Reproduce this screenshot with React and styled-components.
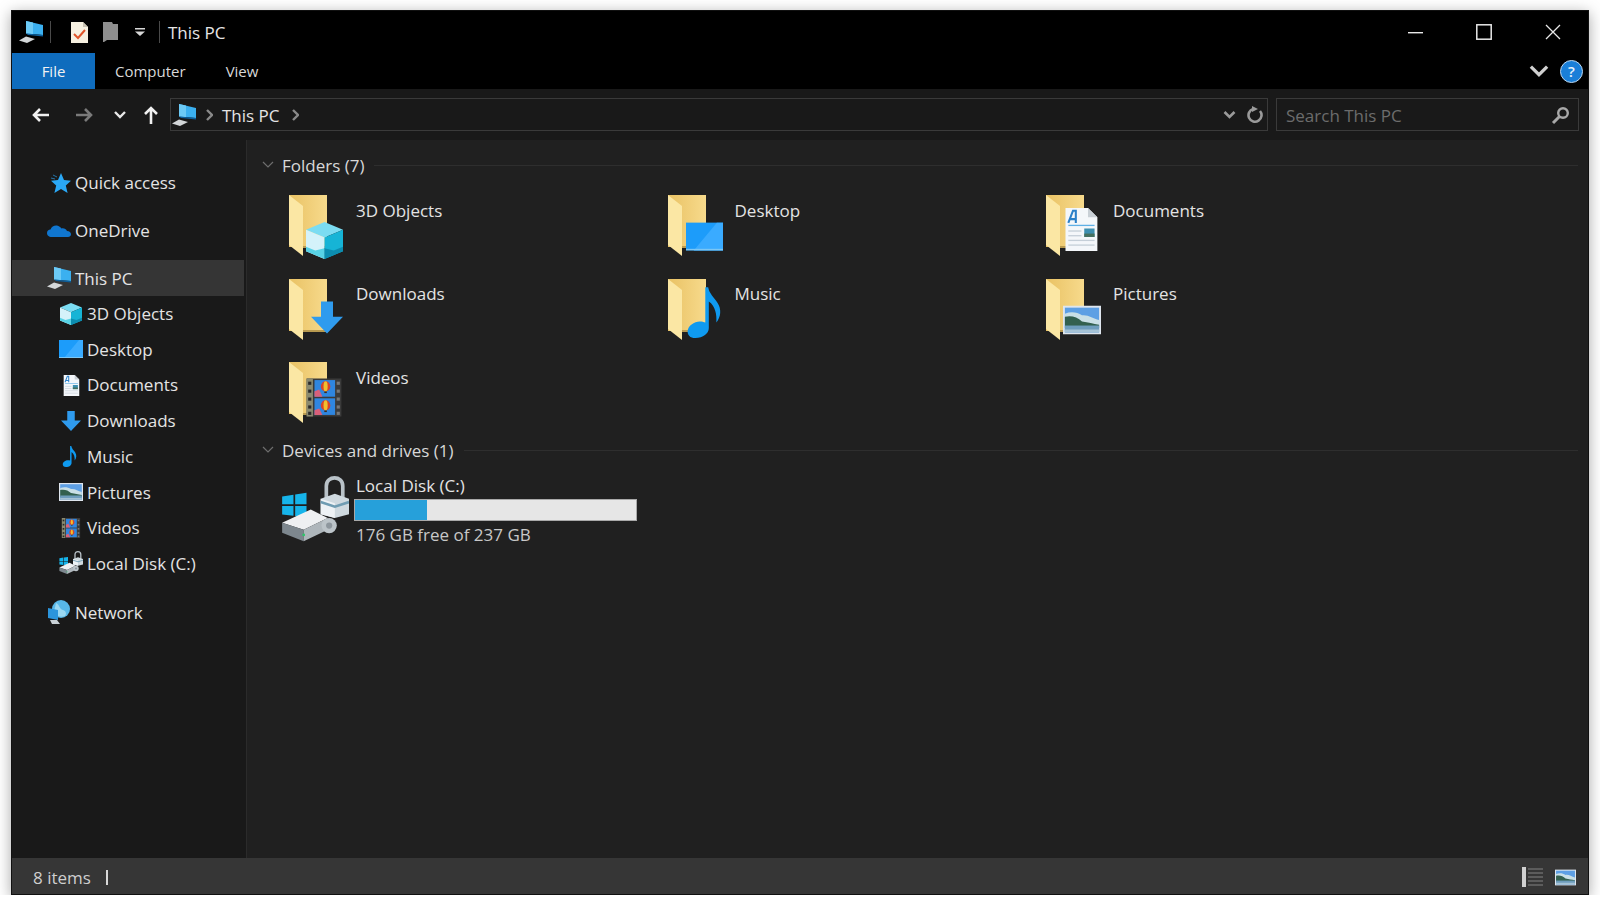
import styled, { createGlobalStyle } from "styled-components";

const GlobalStyle = createGlobalStyle`
  html, body {
    margin: 0;
    background: #fff;
  }
  body {
    font-family: "Open Sans", "Noto Sans", sans-serif;
    color: #e4e4e4;
  }
`;

// icons, all drawn in a 24x24 box so the folder can reuse them
const Cube = () => (
  <>
    <polygon points="12,0 24,5 12,10 0,5" fill="#7bdcf2" />
    <polygon points="0,5 12,10 12,24 0,19" fill="#d4f2fa" />
    <polygon points="12,10 24,5 24,19 12,24" fill="#16b4d6" />
    <polygon points="0,16 6,18.5 12,17 12,24 0,19" fill="#58d3e6" />
    <polygon points="12,17 18,18.5 24,16 24,19 12,24" fill="#0c8db0" />
  </>
);

const Screen = () => (
  <>
    <rect x="0" y="3" width="24" height="18" fill="#1c9cfa" />
    <polygon points="5,21 20,3 24,3 24,21" fill="#3aabff" />
    <rect x="0" y="20" width="24" height="1" fill="#7cc7f5" />
  </>
);

const Doc = () => (
  <>
    <polygon points="4,1 16,1 21,6 21,24 4,24" fill="#f4f7fa" />
    <polygon points="16,1 21,6 16,6" fill="#c9d0d6" />
    <path d="M5.5 9 L8 2.5 L9.5 2.5 L9.5 9 M6.5 7 H9.5" fill="none" stroke="#2b80c8" strokeWidth="1.1" />
    <rect x="5.5" y="10" width="14" height="0.7" fill="#5fb0e6" />
    <rect x="5.5" y="13" width="7" height="0.7" fill="#c5cfd8" />
    <rect x="5.5" y="15.5" width="7" height="0.7" fill="#c5cfd8" />
    <rect x="5.5" y="18" width="14" height="0.7" fill="#c5cfd8" />
    <rect x="5.5" y="20.5" width="14" height="0.7" fill="#c5cfd8" />
    <rect x="14" y="12" width="5.5" height="4.5" fill="#3d8fb0" />
    <rect x="14" y="14.7" width="5.5" height="1.8" fill="#46705e" />
  </>
);

const Arrow = () => (
  <polygon points="7.5,0 16.5,0 16.5,11.5 24,11.5 12,24 0,11.5 7.5,11.5" fill="#2f9bee" />
);

const Note = () => (
  <path
    d="M11 1 L12.3 1 C12.8 4 15 5.5 16.5 8 C18.5 11 18 14.5 16 17 C16.3 13.5 15.5 9.5 12.6 7.5 L12.6 19.5 C12.6 22 10 24 6.5 24 C4 24 3 22.5 3 21 C3 18.5 6 16.5 8.5 16.5 C9.5 16.5 10.3 16.7 11 17 Z"
    fill="#0f9af0"
  />
);

const Picture = () => (
  <>
    <rect x="0" y="3" width="24" height="18" fill="#dfe6ee" />
    <rect x="1.2" y="4.2" width="21.6" height="15.6" fill="#5d9fe4" />
    <path d="M1.2 8 C5 6.5 9 7 12 9 C16 8.5 19 11 22.8 12 V16 H1.2 Z" fill="#c9dfe6" />
    <path d="M1.2 10 C5 9 9 10 12 13 C16 13.5 19 14.5 22.8 15 V17 H1.2 Z" fill="#33604f" />
    <rect x="1.2" y="15.5" width="21.6" height="4.3" fill="#6e9dbd" />
    <rect x="1.2" y="18" width="21.6" height="1.8" fill="#a6c3d6" />
  </>
);

const Balloon = ({ y }) => (
  <>
    <ellipse cx="13" cy={y} rx="3" ry="3.2" fill="#d8442a" />
    <ellipse cx="13" cy={y} rx="1.3" ry="3.2" fill="#efc02e" />
    <rect x="12.2" y={y + 3.2} width="1.6" height="1" fill="#3a2a20" />
  </>
);

const Film = () => (
  <>
    <rect x="1" y="0" width="22" height="24" fill="#3a3a3a" />
    <rect x="1" y="0" width="4" height="24" fill="#8a8a70" />
    <rect x="6" y="1" width="13" height="10.5" fill="#2f86e0" />
    <rect x="6" y="12.5" width="13" height="10.5" fill="#2f86e0" />
    <polygon points="6,8 9,7 11,11.5 6,11.5" fill="#d8607a" />
    <polygon points="6,20 9,19 11,23 6,23" fill="#d8607a" />
    <Balloon y={5} />
    <Balloon y={17} />
    {[2, 7, 12, 17, 21].map((y) => (
      <g key={y}>
        <rect x="2" y={y} width="2" height="2" fill="#2a2a2a" />
        <rect x="20" y={y} width="2" height="2" fill="#777" />
      </g>
    ))}
  </>
);

const Drive = () => (
  <>
    <path d="M16 8 V3.5 C16 -0.3 21.8 -0.3 21.8 3.5 V8" fill="none" stroke="#b9c2c8" strokeWidth="1.3" />
    <polygon points="0.4,7.2 4.4,6.6 4.4,10 0.4,10" fill="#16b4ea" />
    <polygon points="5,6.5 9,5.9 9,10 5,10" fill="#16b4ea" />
    <polygon points="0.4,10.6 4.4,10.6 4.4,14 0.4,13.6" fill="#16b4ea" />
    <polygon points="5,10.6 9,10.6 9,14.6 5,14.1" fill="#16b4ea" />
    <polygon points="0.4,16.5 10.5,11.8 16.5,14.8 8,19" fill="#eef0f2" />
    <polygon points="0.4,16.5 8,19 8,23 0.4,20" fill="#7d878e" />
    <polygon points="8,19 16.5,14.8 16.5,19 8,23" fill="#aeb6bb" />
    <circle cx="8" cy="20.8" r="0.5" fill="#2ec46a" />
    <polygon points="14,8 19,6.3 24,8 24,13.5 19,14.8 14,13.5" fill="#cfd9df" />
    <polygon points="14,8 19,9.6 19,14.8 14,13.5" fill="#eef2f5" />
    <path d="M14 9.2 L19 10.8 L24 9.2" fill="none" stroke="#6f9cb2" strokeWidth="0.9" />
    <circle cx="17" cy="17.5" r="2.7" fill="#bcc4c9" />
    <circle cx="17" cy="17.5" r="1.1" fill="#8e979e" />
  </>
);

const Pc = () => (
  <>
    <polygon points="7,1 24,5 24,15 7,13.5" fill="#3bb0f0" />
    <polygon points="7,1 14,2.6 14,14 7,13.5" fill="#6ccaf6" />
    <polygon points="7,13.5 24,15 24,16.5 9,15" fill="#0b5e9c" />
    <polygon points="0,20.5 7,16.5 16,19 8,23" fill="#d3d6d8" />
  </>
);

const Star = () => (
  <>
    <polygon
      points="14,2 17,9 24,9.7 18.8,14.6 20.6,22 14,18 7.4,22 9.2,14.6 4,9.7 11,9"
      fill="#2aa8f6"
    />
    <path d="M6 4 L10 6 M4 7 L8 8" stroke="#2a8ccc" strokeWidth="0.8" />
  </>
);

const Cloud = () => (
  <path
    d="M5 18 C1.5 18 0 16 0 14 C0 12 1.5 10.5 3.5 10.5 C4.5 7.5 7.5 6 10 6.5 C12 7 13.5 8 14.5 9.5 C17 9 19 10 20 12 C22.5 12 24 13.5 24 15.3 C24 17 22.6 18 21 18 Z"
    fill="#1076cf"
  />
);

const Network = () => (
  <>
    <circle cx="14" cy="9" r="9" fill="#58b8e8" />
    <path d="M9 3 C13 5 12 9 16 10 C19 11 20 14 18 16 C14 18 9 16 7 12 Z" fill="#9ad8f2" />
    <polygon points="1,8 11,10 11,20 1,18" fill="#2b95dc" />
    <polygon points="3,20 10,20 13,24 5,24" fill="#c9d1d6" />
  </>
);

const GLYPHS = { Cube, Screen, Doc, Arrow, Note, Picture, Film, Drive, Pc, Star, Cloud, Network };

const Glyph = ({ name, size = 24 }) => {
  const Shape = GLYPHS[name];
  return (
    <svg width={size} height={size} viewBox="0 0 24 24">
      <Shape />
    </svg>
  );
};

const FOLDER_SPOT = {
  Cube: { x: 17, y: 27, w: 37, h: 37 },
  Screen: { x: 18, y: 23, w: 37, h: 37 },
  Doc: { x: 12, y: 11, w: 45, h: 45 },
  Arrow: { x: 22, y: 22, w: 32, h: 33 },
  Note: { x: 13, y: 6, w: 53, h: 53 },
  Picture: { x: 17, y: 22, w: 38, h: 38 },
  Film: { x: 16, y: 16, w: 38, h: 39 },
};

const FolderIcon = ({ name }) => {
  const spot = FOLDER_SPOT[name];
  const Shape = GLYPHS[name];
  return (
    <svg width="56" height="64" viewBox="0 0 56 64">
      <defs>
        <linearGradient id="folderBack" x1="0" y1="0" x2="1" y2="0">
          <stop offset="0" stopColor="#e9c264" />
          <stop offset="1" stopColor="#f7da8c" />
        </linearGradient>
      </defs>
      <rect x="0" y="0" width="38" height="52" fill="url(#folderBack)" />
      <rect x="13" y="51" width="25" height="2" fill="#b89a50" />
      <polygon points="0,0 14,11 14,61 0,50" fill="#fbe7a4" />
      <svg x={spot.x} y={spot.y} width={spot.w} height={spot.h} viewBox="0 0 24 24">
        <Shape />
      </svg>
    </svg>
  );
};

const Window = styled.div`
  margin: 10px 0 0 11px;
  width: 1578px;
  height: 885px;
  display: flex;
  flex-direction: column;
  background: #202020;
  border: 1px solid #111;
  box-sizing: border-box;
  box-shadow: 0 3px 14px rgba(0, 0, 0, 0.35);
`;

const TitleBar = styled.div`
  height: 42px;
  flex: none;
  background: #000;
  display: flex;
  align-items: center;
  padding-left: 7px;
`;

const QuickIcon = styled.div`
  display: flex;
  margin-right: ${(p) => p.$gap || 0}px;
`;

const TitleSep = styled.div`
  width: 1px;
  height: 22px;
  background: #4a4a4a;
  margin-right: ${(p) => p.$gap}px;
`;

const TitleText = styled.div`
  font-size: 17px;
  color: #e6e6e6;
`;

const WinControls = styled.div`
  margin-left: auto;
  display: flex;
  align-items: center;
  gap: 53px;
  padding-right: 27px;
`;

const Ribbon = styled.div`
  height: 36px;
  flex: none;
  background: #000;
  display: flex;
  align-items: stretch;
  font-size: 15px;
`;

const FileTab = styled.div`
  width: 83px;
  display: flex;
  align-items: center;
  justify-content: center;
  background: #0f6cbd;
  color: #f2f2f2;
`;

const RibbonTab = styled.div`
  display: flex;
  align-items: center;
  margin-left: ${(p) => p.$left}px;
  color: #d8d8d8;
`;

const RibbonRight = styled.div`
  margin-left: auto;
  display: flex;
  align-items: center;
  gap: 11px;
  padding-right: 5px;
`;

const HelpDot = styled.div`
  width: 23px;
  height: 23px;
  border-radius: 50%;
  background: #1a7fd8;
  border: 1px solid #bcd6ee;
  box-sizing: border-box;
  display: flex;
  align-items: center;
  justify-content: center;
  color: #e8f2fb;
  font-size: 15px;
  font-weight: 600;
`;

const AddressRow = styled.div`
  height: 51px;
  flex: none;
  background: #191919;
  display: flex;
  align-items: center;
  padding: 0 9px 0 20px;
`;

const NavButton = styled.div`
  display: flex;
  margin-right: ${(p) => p.$gap}px;
`;

const AddressBox = styled.div`
  width: 1098px;
  height: 33px;
  box-sizing: border-box;
  border: 1px solid #3a3a3a;
  display: flex;
  align-items: center;
  padding: 1px 3px 0 1px;
  font-size: 17px;
  color: #e4e4e4;
  white-space: nowrap;
`;

const Crumb = styled.span`
  display: flex;
  margin: 0 ${(p) => p.$right || 0}px 0 ${(p) => p.$left || 0}px;
`;

const AddressTools = styled.div`
  margin-left: auto;
  display: flex;
  align-items: center;
  gap: 11px;
`;

const SearchBox = styled.div`
  width: 303px;
  height: 33px;
  margin-left: 8px;
  box-sizing: border-box;
  border: 1px solid #3a3a3a;
  display: flex;
  align-items: center;
  justify-content: space-between;
  padding: 1px 8px 0 9px;
  font-size: 17px;
  color: #6c6c6c;
`;

const Main = styled.div`
  flex: 1;
  min-height: 0;
  display: flex;
`;

const Sidebar = styled.nav`
  width: 235px;
  flex: none;
  background: #191919;
  border-right: 1px solid #2b2b2b;
  box-sizing: border-box;
  padding-top: 25px;
`;

const NavRow = styled.div`
  height: ${(p) => (p.$active ? 35.4 : 35.7)}px;
  margin: ${(p) => p.$top || 0}px 2px 0 0;
  padding-left: ${(p) => (p.$sub ? 47 : 35)}px;
  display: flex;
  align-items: center;
  gap: 4px;
  font-size: 17px;
  color: #e4e4e4;
  background: ${(p) => (p.$active ? "#353535" : "transparent")};
`;

const NavIcon = styled.span`
  width: 24px;
  height: 24px;
  display: flex;
  align-items: center;
  justify-content: center;
`;

const Content = styled.main`
  flex: 1;
  min-width: 0;
  padding: 14px 10px 0 15px;
`;

const SectionHeader = styled.div`
  height: 22px;
  margin-top: ${(p) => p.$top || 0}px;
  display: flex;
  align-items: center;
  font-size: 17px;
  color: #d8d8d8;
`;

const HeaderLine = styled.div`
  flex: 1;
  height: 1px;
  margin-left: 10px;
  background: #2e2e2e;
`;

const FolderGrid = styled.div`
  display: grid;
  grid-template-columns: repeat(3, 378.5px);
  grid-auto-rows: 62px;
  row-gap: 21.5px;
  padding: 19px 0 0 27px;
`;

const Tile = styled.div`
  display: flex;
  gap: 11px;
  font-size: 17px;
  line-height: 24px;
  color: #e4e4e4;
`;

const TileName = styled.div`
  padding-top: 3.5px;
`;

const DriveTile = styled.div`
  display: flex;
  padding: 13px 0 0 19px;
  font-size: 17px;
  line-height: 24px;
`;

const DriveIcon = styled.div`
  width: 68px;
  height: 68px;
  margin-right: 5px;
  padding-top: 2px;
`;

const DriveInfo = styled.div`
  display: flex;
  flex-direction: column;
  width: 283px;
`;

const DriveName = styled.div`
  padding-left: 2px;
  height: 25px;
`;

const DriveFree = styled.div`
  padding-left: 2px;
  margin-top: 2px;
  color: #c8c8c8;
`;

const Meter = styled.div`
  height: 22px;
  box-sizing: border-box;
  border: 1px solid #a9a9a9;
  background: #e6e6e6;
`;

const MeterFill = styled.div`
  height: 100%;
  background: #26a0da;
`;

const StatusBar = styled.div`
  height: 36px;
  flex: none;
  background: #363636;
  display: flex;
  align-items: center;
  box-sizing: border-box;
  padding: 2px 12px 0 21px;
  font-size: 17px;
  color: #cfcfcf;
`;

const StatusSep = styled.div`
  width: 2px;
  height: 15px;
  margin-left: 15px;
  background: #d8d8d8;
`;

const ViewButtons = styled.div`
  margin-left: auto;
  display: flex;
  align-items: center;
  gap: 12px;
`;

const Chevron = ({ color = "#8a8a8a", w = 7, h = 12 }) => (
  <svg width={w} height={h} viewBox="0 0 7 12">
    <path d="M1 1 L6 6 L1 11" fill="none" stroke={color} strokeWidth="2.4" />
  </svg>
);

const SmallDown = ({ color = "#e8e8e8", w = 12, h = 8, sw = 2.4 }) => (
  <svg width={w} height={h} viewBox="0 0 12 8">
    <path d="M1 1 L6 6 L11 1" fill="none" stroke={color} strokeWidth={sw} />
  </svg>
);

const ArrowH = ({ color, flip }) => (
  <svg width="18" height="16" viewBox="0 0 18 16">
    <path
      d={flip ? "M1 8 H16 M10 2 L16 8 L10 14" : "M17 8 H2 M8 2 L2 8 L8 14"}
      fill="none"
      stroke={color}
      strokeWidth="2.6"
    />
  </svg>
);

const FOLDERS = [
  ["3D Objects", "Cube"],
  ["Desktop", "Screen"],
  ["Documents", "Doc"],
  ["Downloads", "Arrow"],
  ["Music", "Note"],
  ["Pictures", "Picture"],
  ["Videos", "Film"],
];

const TREE = [
  { label: "Quick access", icon: "Star" },
  { label: "OneDrive", icon: "Cloud", top: 12 },
  { label: "This PC", icon: "Pc", top: 12, active: true },
  { label: "3D Objects", icon: "Cube", sub: true, size: 22 },
  { label: "Desktop", icon: "Screen", sub: true },
  { label: "Documents", icon: "Doc", sub: true, size: 22 },
  { label: "Downloads", icon: "Arrow", sub: true, size: 20 },
  { label: "Music", icon: "Note", sub: true, size: 22 },
  { label: "Pictures", icon: "Picture", sub: true },
  { label: "Videos", icon: "Film", sub: true, size: 20 },
  { label: "Local Disk (C:)", icon: "Drive", sub: true },
  { label: "Network", icon: "Network", top: 13 },
];

const USED_PCT = ((237 - 176) / 237) * 100;

export default function App() {
  return (
    <>
      <GlobalStyle />
      <Window>
        <TitleBar>
          <QuickIcon $gap={7}>
            <Glyph name="Pc" />
          </QuickIcon>
          <TitleSep $gap={20} />
          <QuickIcon $gap={15}>
            <svg width="17" height="21" viewBox="0 0 17 21">
              <polygon points="0,0 12,0 17,5 17,21 0,21" fill="#f6f0e0" />
              <polygon points="12,0 17,5 12,5" fill="#c8c2b2" />
              <path d="M3 12 L7 16 L14 8" fill="none" stroke="#e0552a" strokeWidth="2" />
            </svg>
          </QuickIcon>
          <QuickIcon $gap={17}>
            <svg width="15" height="20" viewBox="0 0 15 20">
              <polygon points="0,0 9,0 10,2 15,2 15,18 4,18 1,20 0,20" fill="#8f8f8f" />
            </svg>
          </QuickIcon>
          <QuickIcon $gap={14}>
            <svg width="10" height="8" viewBox="0 0 10 8">
              <rect x="0" y="0" width="10" height="1.5" fill="#d8d8d8" />
              <polygon points="0,3.5 10,3.5 5,8" fill="#d8d8d8" />
            </svg>
          </QuickIcon>
          <TitleSep $gap={8} />
          <TitleText>This PC</TitleText>
          <WinControls>
            <svg width="15" height="15" viewBox="0 0 15 15">
              <rect x="0" y="7" width="15" height="1.4" fill="#e8e8e8" />
            </svg>
            <svg width="16" height="16" viewBox="0 0 16 16">
              <rect x="0.8" y="0.8" width="14.4" height="14.4" fill="none" stroke="#e8e8e8" strokeWidth="1.5" />
            </svg>
            <svg width="16" height="16" viewBox="0 0 16 16">
              <path d="M1 1 L15 15 M15 1 L1 15" stroke="#e8e8e8" strokeWidth="1.3" />
            </svg>
          </WinControls>
        </TitleBar>
        <Ribbon>
          <FileTab>File</FileTab>
          <RibbonTab $left={20}>Computer</RibbonTab>
          <RibbonTab $left={40}>View</RibbonTab>
          <RibbonRight>
            <SmallDown color="#d0d0d0" w={20} h={13} sw={2} />
            <HelpDot>?</HelpDot>
          </RibbonRight>
        </Ribbon>
        <AddressRow>
          <NavButton $gap={25}>
            <ArrowH color="#f0f0f0" />
          </NavButton>
          <NavButton $gap={21}>
            <ArrowH color="#7a7a7a" flip />
          </NavButton>
          <NavButton $gap={18}>
            <SmallDown />
          </NavButton>
          <NavButton $gap={12}>
            <svg width="14" height="18" viewBox="0 0 14 18">
              <path d="M7 18 V2 M1 8 L7 2 L13 8" fill="none" stroke="#f0f0f0" strokeWidth="2.6" />
            </svg>
          </NavButton>
          <AddressBox>
            <Glyph name="Pc" />
            <Crumb $left={10} $right={9}>
              <Chevron />
            </Crumb>
            This PC
            <Crumb $left={12}>
              <Chevron />
            </Crumb>
            <AddressTools>
              <SmallDown color="#9a9a9a" w={13} h={8} sw={2.6} />
              <svg width="17" height="18" viewBox="0 0 17 18">
                <path d="M6 3 A6.5 6.5 0 1 0 13 5" fill="none" stroke="#9a9a9a" strokeWidth="2.6" />
                <polygon points="5,0 11,3 5,6" fill="#9a9a9a" />
              </svg>
            </AddressTools>
          </AddressBox>
          <SearchBox>
            Search This PC
            <svg width="19" height="19" viewBox="0 0 19 19">
              <circle cx="12" cy="7" r="4.8" fill="none" stroke="#a8a8a8" strokeWidth="2.4" />
              <path d="M8.5 10.5 L2 17" stroke="#a8a8a8" strokeWidth="3" />
            </svg>
          </SearchBox>
        </AddressRow>
        <Main>
          <Sidebar>
            {TREE.map((row) => (
              <NavRow key={row.label} $sub={row.sub} $top={row.top} $active={row.active}>
                <NavIcon>
                  <Glyph name={row.icon} size={row.size || 24} />
                </NavIcon>
                {row.label}
              </NavRow>
            ))}
          </Sidebar>
          <Content>
            <SectionHeader>
              <SmallDown color="#6e6e6e" w={12} h={8} sw={1.2} />
              <Crumb $left={8}>Folders (7)</Crumb>
              <HeaderLine />
            </SectionHeader>
            <FolderGrid>
              {FOLDERS.map(([label, icon]) => (
                <Tile key={label}>
                  <FolderIcon name={icon} />
                  <TileName>{label}</TileName>
                </Tile>
              ))}
            </FolderGrid>
            <SectionHeader $top={15}>
              <SmallDown color="#6e6e6e" w={12} h={8} sw={1.2} />
              <Crumb $left={8}>Devices and drives (1)</Crumb>
              <HeaderLine />
            </SectionHeader>
            <DriveTile>
              <DriveIcon>
                <Glyph name="Drive" size={68} />
              </DriveIcon>
              <DriveInfo>
                <DriveName>Local Disk (C:)</DriveName>
                <Meter>
                  <MeterFill style={{ width: `${USED_PCT}%` }} />
                </Meter>
                <DriveFree>176 GB free of 237 GB</DriveFree>
              </DriveInfo>
            </DriveTile>
          </Content>
        </Main>
        <StatusBar>
          8 items
          <StatusSep />
          <ViewButtons>
            <svg width="21" height="20" viewBox="0 0 21 20">
              <rect x="0" y="0" width="4" height="20" fill="#d0d0d0" />
              <path d="M6 2 H21 M6 6 H21 M6 10 H21 M6 14 H21 M6 18 H21" stroke="#6a6a6a" strokeWidth="1.3" />
            </svg>
            <Glyph name="Picture" size={21} />
          </ViewButtons>
        </StatusBar>
      </Window>
    </>
  );
}
